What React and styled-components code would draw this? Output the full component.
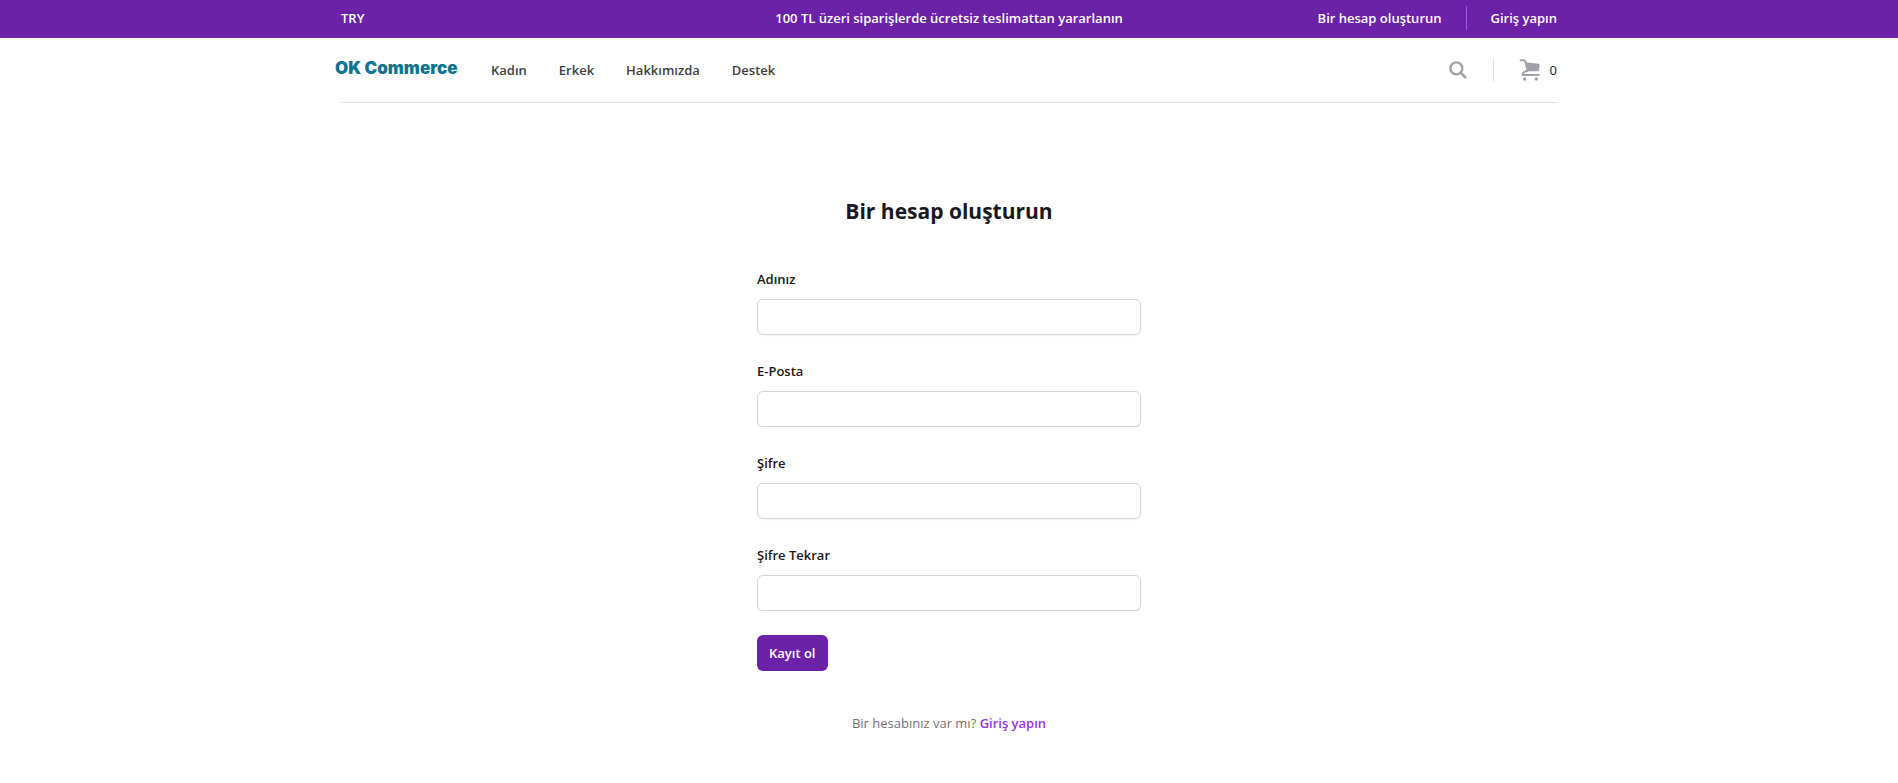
import React from "react";
import styled, { createGlobalStyle } from "styled-components";

const GlobalStyle = createGlobalStyle`
  *, *::before, *::after { box-sizing: border-box; }
  body {
    margin: 0;
    background: #fff;
    color: #18181b;
    font-family: "Segoe UI", "Open Sans", "Noto Sans", sans-serif;
    font-size: 13px;
    line-height: 24px;
  }
  a { color: inherit; text-decoration: none; }
`;

const Container = styled.div`
  max-width: 1280px;
  margin: 0 auto;
  padding: 0 32px;
`;

const TopBar = styled.div`
  background: #6b21a8;
  color: #fff;
  font-weight: 600;
`;

const TopBarInner = styled(Container)`
  display: grid;
  grid-template-columns: 1fr auto 1fr;
  align-items: center;
  min-height: 38px;
  padding-bottom: 2px;
`;

const Announcement = styled.p`
  margin: 0;
  text-align: center;
`;

const Actions = styled.div`
  display: flex;
  align-items: center;
  justify-content: flex-end;
  gap: 24px;
`;

const Divider = styled.span`
  width: 1px;
  height: 24px;
  background: ${(p) => p.$color};
`;

const HeaderRow = styled.header`
  display: flex;
  align-items: center;
  height: 65px;
  border-bottom: 1px solid #e4e4e7;
`;

const Logo = styled.a`
  width: 124px;
  margin-left: -6px;
  padding-bottom: 4px;
  color: #0e7490;
  font-family: Inter, sans-serif;
  font-size: 17px;
  font-weight: 900;
  white-space: nowrap;
`;

const Nav = styled.nav`
  display: flex;
  gap: 32px;
  margin-left: 32px;
  margin-right: auto;
  color: #3f3f46;
  font-weight: 600;
`;

const IconButton = styled.button`
  display: flex;
  align-items: center;
  padding: 2px;
  border: 0;
  background: none;
  color: #a1a1aa;
`;

const CartLink = styled.a`
  display: flex;
  align-items: center;
  gap: 10px;
  font-weight: 500;

  svg { color: #a1a1aa; }
`;

const Main = styled.main`
  max-width: 384px;
  margin: 0 auto;
  padding: 92px 0 48px;
`;

const Title = styled.h1`
  margin: 0 0 40px;
  font-size: 21px;
  line-height: 32px;
  font-weight: 700;
  text-align: center;
`;

const Form = styled.form`
  display: flex;
  flex-direction: column;
  align-items: flex-start;
  gap: 24px;
`;

const Field = styled.div`
  display: flex;
  flex-direction: column;
  gap: 8px;
  width: 100%;
`;

const Label = styled.label`
  font-weight: 600;
`;

const Input = styled.input`
  width: 100%;
  height: 36px;
  padding: 0 12px;
  border: 1px solid #d4d4d4;
  border-radius: 6px;
  background: #fff;
  box-shadow: 0 1px 2px rgba(0, 0, 0, 0.05);
  font: inherit;
`;

const SubmitButton = styled.button`
  height: 36px;
  padding: 0 12px;
  border: 0;
  border-radius: 6px;
  background: #6b21a8;
  color: #fff;
  font: inherit;
  font-weight: 600;
`;

const Hint = styled.p`
  margin: 40px 0 0;
  color: #71717a;
  text-align: center;

  a {
    color: #9333ea;
    font-weight: 600;
  }
`;

const SearchIcon = () => (
  <svg width="18" height="18" viewBox="0 0 54 54" fill="none" stroke="currentColor" strokeWidth="7" strokeLinecap="round" aria-hidden="true">
    <circle cx="22" cy="22" r="18" />
    <path d="M36 36 L49 49" strokeWidth="8" />
  </svg>
);

const CartIcon = () => (
  <svg width="22" height="22" viewBox="-6 0 66 66" fill="none" aria-hidden="true">
    <path d="M2 4h10c2 0 3 1 4 3l7 28" stroke="currentColor" strokeWidth="6" strokeLinecap="round" />
    <path d="M16 10L56 14q3 0 3 3L57 33q0 4-4 4H22z" fill="currentColor" />
    <path d="M22 36C13 37 8 42 8 48H56" stroke="currentColor" strokeWidth="6" strokeLinecap="round" strokeLinejoin="round" />
    <circle cx="14" cy="60" r="5" fill="currentColor" />
    <circle cx="49" cy="60" r="5" fill="currentColor" />
  </svg>
);

const navItems = ["Kadın", "Erkek", "Hakkımızda", "Destek"];

const fields = [
  { id: "name", label: "Adınız", type: "text" },
  { id: "email", label: "E-Posta", type: "email" },
  { id: "password", label: "Şifre", type: "password" },
  { id: "password-confirm", label: "Şifre Tekrar", type: "password" },
];

export default function App() {
  return (
    <>
      <GlobalStyle />
      <TopBar>
        <TopBarInner>
          <span>TRY</span>
          <Announcement>100 TL üzeri siparişlerde ücretsiz teslimattan yararlanın</Announcement>
          <Actions>
            <a href="#register">Bir hesap oluşturun</a>
            <Divider $color="#a855f7" />
            <a href="#login">Giriş yapın</a>
          </Actions>
        </TopBarInner>
      </TopBar>
      <Container>
        <HeaderRow>
          <Logo href="#home">OK Commerce</Logo>
          <Nav>
            {navItems.map((item) => (
              <a key={item} href="#shop">{item}</a>
            ))}
          </Nav>
          <Actions>
            <IconButton type="button" aria-label="Ara"><SearchIcon /></IconButton>
            <Divider $color="#e9d5ff" />
            <CartLink href="#cart"><CartIcon /><span>0</span></CartLink>
          </Actions>
        </HeaderRow>
      </Container>
      <Main>
        <Title>Bir hesap oluşturun</Title>
        <Form onSubmit={(e) => e.preventDefault()}>
          {fields.map(({ id, label, type }) => (
            <Field key={id}>
              <Label htmlFor={id}>{label}</Label>
              <Input id={id} name={id} type={type} />
            </Field>
          ))}
          <SubmitButton type="submit">Kayıt ol</SubmitButton>
        </Form>
        <Hint>Bir hesabınız var mı? <a href="#login">Giriş yapın</a></Hint>
      </Main>
    </>
  );
}
